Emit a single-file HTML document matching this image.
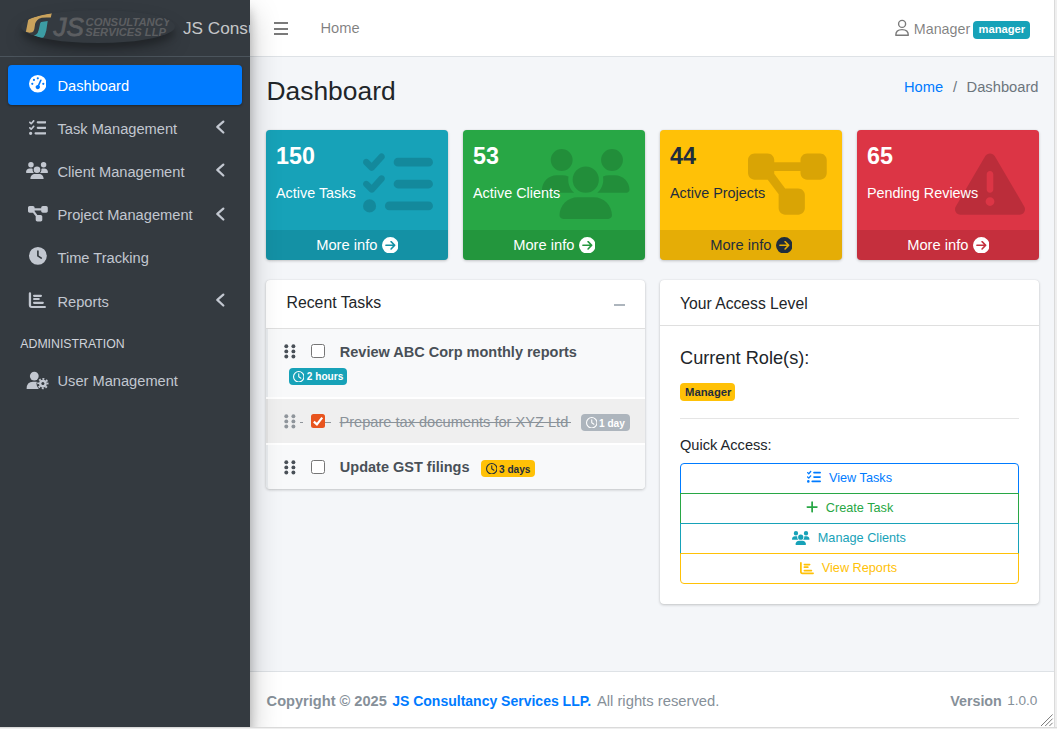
<!DOCTYPE html>
<html><head><meta charset="utf-8"><title>Dashboard</title>
<style>
html,body{margin:0;padding:0;width:1057px;height:729px;overflow:hidden;background:#fff;font-family:"Liberation Sans",sans-serif}
.a{position:absolute;display:block}
.t{position:absolute;white-space:nowrap;line-height:1}
#side{position:absolute;left:0;top:0;width:250px;height:727px;z-index:3;overflow:hidden}
#main{position:absolute;left:0;top:0;width:1057px;height:729px;z-index:1}
</style></head><body>
<div id="main"><div class="a" style="left:0px;top:0px;width:1054px;height:727px;background:#f4f6f9"></div><div class="a" style="left:250px;top:0px;width:804px;height:56px;background:#fff"></div><div class="a" style="left:250px;top:56px;width:804px;height:1px;background:#dee2e6"></div><div class="a" style="left:250px;top:671px;width:804px;height:1px;background:#dee2e6"></div><div class="a" style="left:250px;top:672px;width:804px;height:55px;background:#fff"></div><div class="a" style="left:0px;top:0px;width:250px;height:727px;background:#343a40;box-shadow:0 14px 28px rgba(0,0,0,.25),0 10px 10px rgba(0,0,0,.22);z-index:2"></div><div class="a" style="left:1054px;top:0px;width:3px;height:729px;background:#efefef;border-left:1px solid #dadada;box-sizing:border-box;z-index:5"></div><div class="a" style="left:0px;top:727px;width:1057px;height:2px;background:#efefef;border-top:1px solid #dadada;box-sizing:border-box;z-index:5"></div><div class="a" style="left:274px;top:22px;width:14px;height:2px;background:#7a7a7a"></div><div class="a" style="left:274px;top:27.5px;width:14px;height:2px;background:#7a7a7a"></div><div class="a" style="left:274px;top:33px;width:14px;height:2px;background:#7a7a7a"></div><div class="t" style="left:320.50px;top:21.36px;font-size:14.7px;color:rgba(0,0,0,.5);font-weight:400;">Home</div><svg class="a" style="left:894px;top:19px;" width="16" height="18" viewBox="0 0 16 18"><circle cx="8.1" cy="4.9" r="3.5" fill="none" stroke="#7a7a7a" stroke-width="1.4"/><path d="M1.8 16.2 C1.8 12.5 4.5 10.6 8 10.6 C11.5 10.6 14.3 12.5 14.3 16.2 Z" fill="none" stroke="#7a7a7a" stroke-width="1.4" stroke-linejoin="round"/></svg><div class="t" style="left:913.80px;top:21.80px;font-size:14.3px;color:rgba(0,0,0,.5);font-weight:400;">Manager</div><div class="a" style="left:973px;top:21px;width:57px;height:18px;background:#17a2b8;border-radius:4px"></div><div class="t" style="left:978.50px;top:24.32px;font-size:11.2px;color:#fff;font-weight:700;">manager</div><div class="t" style="left:266.50px;top:78.05px;font-size:26.4px;color:#212529;font-weight:400;">Dashboard</div><div class="t" style="left:904.00px;top:79.96px;font-size:14.7px;color:#007bff;font-weight:400;">Home</div><div class="t" style="left:953.00px;top:79.96px;font-size:14.7px;color:#6c757d;font-weight:400;">/</div><div class="t" style="left:966.60px;top:79.96px;font-size:14.7px;color:#6c757d;font-weight:400;">Dashboard</div><div class="a" style="left:266px;top:130px;width:182px;height:130px;background:#17a2b8;border-radius:4px;box-shadow:0 0 1px rgba(0,0,0,.125),0 1px 3px rgba(0,0,0,.2);overflow:hidden"></div><svg class="a" style="left:363.10px;top:149.40px;" width="70.00" height="70.00" viewBox="0 0 512 512"><path fill="rgba(0,0,0,.15)" d="M152.1 38.2c9.9 8.9 10.7 24 1.8 33.9l-72 80c-4.4 4.9-10.6 7.8-17.2 7.9s-12.9-2.4-17.6-7L7 113C-2.3 103.6-2.3 88.4 7 79s24.6-9.4 33.9 0l22.1 22.1 55.1-61.2c8.9-9.900 24-10.7 33.9-1.8zm0 160c9.9 8.9 10.7 24 1.8 33.9l-72 80c-4.4 4.9-10.6 7.8-17.2 7.9s-12.9-2.4-17.6-7L7 273c-9.4-9.4-9.4-24.6 0-33.9s24.6-9.4 33.9 0l22.1 22.1 55.1-61.2c8.9-9.9 24-10.7 33.9-1.8zM224 96c0-17.7 14.3-32 32-32H480c17.7 0 32 14.3 32 32s-14.3 32-32 32H256c-17.7 0-32-14.3-32-32zm0 160c0-17.7 14.3-32 32-32H480c17.7 0 32 14.3 32 32s-14.3 32-32 32H256c-17.7 0-32-14.3-32-32zM160 416c0-17.7 14.3-32 32-32H480c17.7 0 32 14.3 32 32s-14.3 32-32 32H192c-17.7 0-32-14.3-32-32zM48 368a48 48 0 1 1 0 96 48 48 0 1 1 0-96z"/></svg><div class="t" style="left:276.00px;top:145.28px;font-size:23.3px;color:#fff;font-weight:700;">150</div><div class="t" style="left:276.00px;top:186.41px;font-size:14.4px;color:#fff;font-weight:400;">Active Tasks</div><div class="a" style="left:266px;top:230px;width:182px;height:30px;background:rgba(0,0,0,.1);border-radius:0 0 4px 4px"></div><div class="t" style="left:316.20px;top:238.36px;font-size:14.7px;color:#fff;font-weight:400;">More info</div><svg class="a" style="left:381.50px;top:236.80px;" width="16.60" height="16.60" viewBox="0 0 512 512"><path fill="#fff" d="M0 256a256 256 0 1 0 512 0A256 256 0 1 0 0 256zM297 385c-9.4 9.4-24.6 9.4-33.9 0s-9.4-24.6 0-33.9l71-71L120 280c-13.3 0-24-10.7-24-24s10.7-24 24-24l214.1 0-71-71c-9.4-9.4-9.4-24.6 0-33.9s24.6-9.4 33.9 0L409 239c9.4 9.4 9.4 24.6 0 33.9L297 385z"/></svg><div class="a" style="left:463px;top:130px;width:182px;height:130px;background:#28a745;border-radius:4px;box-shadow:0 0 1px rgba(0,0,0,.125),0 1px 3px rgba(0,0,0,.2);overflow:hidden"></div><svg class="a" style="left:542.20px;top:149.40px;" width="87.50" height="70.00" viewBox="0 0 640 512"><path fill="rgba(0,0,0,.15)" d="M144 0a80 80 0 1 1 0 160A80 80 0 1 1 144 0zM512 0a80 80 0 1 1 0 160A80 80 0 1 1 512 0zM0 298.7C0 239.8 47.8 192 106.7 192h42.7c15.9 0 31 3.5 44.6 9.7c-1.3 7.2-1.9 14.7-1.9 22.3c0 38.2 16.8 72.5 43.3 96c-.2 0-.4 0-.7 0H21.3C9.6 320 0 310.4 0 298.7zM405.3 320c-.2 0-.4 0-.7 0c26.6-23.5 43.3-57.8 43.3-96c0-7.6-.7-15-1.9-22.3c13.6-6.3 28.7-9.7 44.6-9.7h42.7C592.2 192 640 239.8 640 298.7c0 11.8-9.6 21.3-21.3 21.3H405.3zM224 224a96 96 0 1 1 192 0 96 96 0 1 1 -192 0zM128 485.3C128 411.7 187.700 352 261.3 352H378.7C452.3 352 512 411.7 512 485.3c0 14.7-11.9 26.7-26.7 26.7H154.7c-14.7 0-26.7-11.9-26.7-26.7z"/></svg><div class="t" style="left:473.00px;top:145.28px;font-size:23.3px;color:#fff;font-weight:700;">53</div><div class="t" style="left:473.00px;top:186.41px;font-size:14.4px;color:#fff;font-weight:400;">Active Clients</div><div class="a" style="left:463px;top:230px;width:182px;height:30px;background:rgba(0,0,0,.1);border-radius:0 0 4px 4px"></div><div class="t" style="left:513.20px;top:238.36px;font-size:14.7px;color:#fff;font-weight:400;">More info</div><svg class="a" style="left:578.50px;top:236.80px;" width="16.60" height="16.60" viewBox="0 0 512 512"><path fill="#fff" d="M0 256a256 256 0 1 0 512 0A256 256 0 1 0 0 256zM297 385c-9.4 9.4-24.6 9.4-33.9 0s-9.4-24.6 0-33.9l71-71L120 280c-13.3 0-24-10.7-24-24s10.7-24 24-24l214.1 0-71-71c-9.4-9.4-9.4-24.6 0-33.9s24.6-9.4 33.9 0L409 239c9.4 9.4 9.4 24.6 0 33.9L297 385z"/></svg><div class="a" style="left:660px;top:130px;width:182px;height:130px;background:#ffc107;border-radius:4px;box-shadow:0 0 1px rgba(0,0,0,.125),0 1px 3px rgba(0,0,0,.2);overflow:hidden"></div><svg class="a" style="left:748.10px;top:149.40px;" width="78.75" height="70.00" viewBox="0 0 576 512"><path fill="rgba(0,0,0,.15)" d="M0 80C0 53.5 21.5 32 48 32h96c26.5 0 48 21.5 48 48V96H384V80c0-26.5 21.5-48 48-48h96c26.5 0 48 21.5 48 48v96c0 26.5-21.5 48-48 48H432c-26.5 0-48-21.5-48-48V160H192v16c0 1.7-.1 3.4-.3 5L272 288h96c26.5 0 48 21.5 48 48v96c0 26.5-21.5 48-48 48H272c-26.5 0-48-21.5-48-48V336c0-1.7 .1-3.4 .3-5L144 224H48c-26.5 0-48-21.5-48-48V80z"/></svg><div class="t" style="left:670.00px;top:145.28px;font-size:23.3px;color:#1f2d3d;font-weight:700;">44</div><div class="t" style="left:670.00px;top:186.41px;font-size:14.4px;color:#1f2d3d;font-weight:400;">Active Projects</div><div class="a" style="left:660px;top:230px;width:182px;height:30px;background:rgba(0,0,0,.1);border-radius:0 0 4px 4px"></div><div class="t" style="left:710.20px;top:238.36px;font-size:14.7px;color:#1f2d3d;font-weight:400;">More info</div><svg class="a" style="left:775.50px;top:236.80px;" width="16.60" height="16.60" viewBox="0 0 512 512"><path fill="#1f2d3d" d="M0 256a256 256 0 1 0 512 0A256 256 0 1 0 0 256zM297 385c-9.4 9.4-24.6 9.4-33.9 0s-9.4-24.6 0-33.9l71-71L120 280c-13.3 0-24-10.7-24-24s10.7-24 24-24l214.1 0-71-71c-9.4-9.4-9.4-24.6 0-33.9s24.6-9.4 33.9 0L409 239c9.4 9.4 9.4 24.6 0 33.9L297 385z"/></svg><div class="a" style="left:857px;top:130px;width:182px;height:130px;background:#dc3545;border-radius:4px;box-shadow:0 0 1px rgba(0,0,0,.125),0 1px 3px rgba(0,0,0,.2);overflow:hidden"></div><svg class="a" style="left:954.60px;top:149.40px;" width="70.00" height="70.00" viewBox="0 0 512 512"><path fill="rgba(0,0,0,.15)" d="M256 32c14.2 0 27.3 7.5 34.5 19.8l216 368c7.3 12.4 7.3 27.7 .2 40.1S486.3 480 472 480H40c-14.3 0-27.6-7.700-34.7-20.1s-7-27.8 .2-40.1l216-368C228.7 39.5 241.8 32 256 32zm0 128c-13.3 0-24 10.7-24 24V296c0 13.3 10.7 24 24 24s24-10.7 24-24V184c0-13.3-10.7-24-24-24zm32 224a32 32 0 1 0 -64 0 32 32 0 1 0 64 0z"/></svg><div class="t" style="left:867.00px;top:145.28px;font-size:23.3px;color:#fff;font-weight:700;">65</div><div class="t" style="left:867.00px;top:186.41px;font-size:14.4px;color:#fff;font-weight:400;">Pending Reviews</div><div class="a" style="left:857px;top:230px;width:182px;height:30px;background:rgba(0,0,0,.1);border-radius:0 0 4px 4px"></div><div class="t" style="left:907.20px;top:238.36px;font-size:14.7px;color:#fff;font-weight:400;">More info</div><svg class="a" style="left:972.50px;top:236.80px;" width="16.60" height="16.60" viewBox="0 0 512 512"><path fill="#fff" d="M0 256a256 256 0 1 0 512 0A256 256 0 1 0 0 256zM297 385c-9.4 9.4-24.6 9.4-33.9 0s-9.4-24.6 0-33.9l71-71L120 280c-13.3 0-24-10.7-24-24s10.7-24 24-24l214.1 0-71-71c-9.4-9.4-9.4-24.6 0-33.9s24.6-9.4 33.9 0L409 239c9.4 9.4 9.4 24.6 0 33.9L297 385z"/></svg><div class="a" style="left:266px;top:280px;width:379px;height:209px;background:#fff;border-radius:4px;box-shadow:0 0 1px rgba(0,0,0,.125),0 1px 3px rgba(0,0,0,.2)"></div><div class="a" style="left:266px;top:328px;width:379px;height:1px;background:rgba(0,0,0,.125)"></div><div class="t" style="left:286.50px;top:295.43px;font-size:15.8px;color:#212529;font-weight:400;">Recent Tasks</div><div class="a" style="left:614px;top:304px;width:11px;height:2px;background:#adb5bd"></div><div class="a" style="left:266px;top:329px;width:379px;height:68px;background:#f8f9fa;border-left:2px solid #e9ecef;box-sizing:border-box"></div><div class="a" style="left:266px;top:399px;width:379px;height:44px;background:#efefef;border-left:2px solid #e4e4e4;box-sizing:border-box"></div><div class="a" style="left:266px;top:445px;width:379px;height:44px;background:#f8f9fa;border-left:2px solid #e9ecef;box-sizing:border-box;border-radius:0 0 4px 4px"></div><svg class="a" style="left:283.5px;top:343.5px;" width="12" height="15" viewBox="0 0 12 15"><circle cx="2.3" cy="2.3" r="1.95" fill="#495057"/><circle cx="2.3" cy="7.4" r="1.95" fill="#495057"/><circle cx="2.3" cy="12.5" r="1.95" fill="#495057"/><circle cx="9.4" cy="2.3" r="1.95" fill="#495057"/><circle cx="9.4" cy="7.4" r="1.95" fill="#495057"/><circle cx="9.4" cy="12.5" r="1.95" fill="#495057"/></svg><div class="a" style="left:311px;top:344px;width:14px;height:14px;background:#fff;border:1px solid #767676;border-radius:2.5px;box-sizing:border-box"></div><div class="t" style="left:339.80px;top:344.83px;font-size:14.5px;color:#495057;font-weight:700;">Review ABC Corp monthly reports</div><div class="a" style="left:288.8px;top:368px;width:58px;height:17px;background:#17a2b8;border-radius:4px"></div><svg class="a" style="left:292.90px;top:370.70px;" width="11.50" height="11.50" viewBox="0 0 512 512"><path fill="#fff" d="M464 256A208 208 0 1 1 48 256a208 208 0 1 1 416 0zM0 256a256 256 0 1 0 512 0A256 256 0 1 0 0 256zM232 120V256c0 8 4 15.5 10.7 20l96 64c11 7.4 25.9 5.4 33.3-5.6s5.4-25.9-5.6-33.3L280 243.2V120c0-13.3-10.7-24-24-24s-24 10.7-24 24z"/></svg><div class="t" style="left:306.80px;top:372.25px;font-size:10.1px;color:#fff;font-weight:700;">2 hours</div><svg class="a" style="left:283.5px;top:413.5px;" width="12" height="15" viewBox="0 0 12 15"><circle cx="2.3" cy="2.3" r="1.95" fill="#8f959b"/><circle cx="2.3" cy="7.4" r="1.95" fill="#8f959b"/><circle cx="2.3" cy="12.5" r="1.95" fill="#8f959b"/><circle cx="9.4" cy="2.3" r="1.95" fill="#8f959b"/><circle cx="9.4" cy="7.4" r="1.95" fill="#8f959b"/><circle cx="9.4" cy="12.5" r="1.95" fill="#8f959b"/></svg><div class="a" style="left:300px;top:422px;width:3px;height:1px;background:#8f959b"></div><div class="a" style="left:325px;top:422px;width:6px;height:1px;background:#8f959b"></div><div class="a" style="left:566px;top:422px;width:5px;height:1px;background:#8a9299"></div><div class="a" style="left:311px;top:414px;width:14px;height:14px;background:#e8541e;border-radius:2.5px"></div><svg class="a" style="left:311px;top:414px;" width="14" height="14" viewBox="0 0 14 14"><polyline points="2.8,7.6 5.9,10.4 11.2,3.6" fill="none" stroke="#fff" stroke-width="2.2"/></svg><div class="t" style="left:339.50px;top:414.64px;font-size:14.6px;color:#8a9299;font-weight:400;text-decoration:line-through">Prepare tax documents for XYZ Ltd</div><div class="a" style="left:581px;top:414.3px;width:49px;height:16.5px;background:#adb5bd;border-radius:4px"></div><svg class="a" style="left:585.50px;top:416.80px;" width="11.50" height="11.50" viewBox="0 0 512 512"><path fill="#fff" d="M464 256A208 208 0 1 1 48 256a208 208 0 1 1 416 0zM0 256a256 256 0 1 0 512 0A256 256 0 1 0 0 256zM232 120V256c0 8 4 15.5 10.7 20l96 64c11 7.4 25.9 5.4 33.3-5.6s5.4-25.9-5.6-33.3L280 243.2V120c0-13.3-10.7-24-24-24s-24 10.7-24 24z"/></svg><div class="t" style="left:599.00px;top:418.85px;font-size:10.1px;color:#fff;font-weight:700;">1 day</div><svg class="a" style="left:283.5px;top:459.5px;" width="12" height="15" viewBox="0 0 12 15"><circle cx="2.3" cy="2.3" r="1.95" fill="#495057"/><circle cx="2.3" cy="7.4" r="1.95" fill="#495057"/><circle cx="2.3" cy="12.5" r="1.95" fill="#495057"/><circle cx="9.4" cy="2.3" r="1.95" fill="#495057"/><circle cx="9.4" cy="7.4" r="1.95" fill="#495057"/><circle cx="9.4" cy="12.5" r="1.95" fill="#495057"/></svg><div class="a" style="left:311px;top:460px;width:14px;height:14px;background:#fff;border:1px solid #767676;border-radius:2.5px;box-sizing:border-box"></div><div class="t" style="left:339.80px;top:460.43px;font-size:14.5px;color:#495057;font-weight:700;">Update GST filings</div><div class="a" style="left:481px;top:460.2px;width:54px;height:16.5px;background:#ffc107;border-radius:4px"></div><svg class="a" style="left:485.50px;top:462.70px;" width="11.50" height="11.50" viewBox="0 0 512 512"><path fill="#1f2d3d" d="M464 256A208 208 0 1 1 48 256a208 208 0 1 1 416 0zM0 256a256 256 0 1 0 512 0A256 256 0 1 0 0 256zM232 120V256c0 8 4 15.5 10.7 20l96 64c11 7.4 25.9 5.4 33.3-5.6s5.4-25.9-5.6-33.3L280 243.2V120c0-13.3-10.7-24-24-24s-24 10.7-24 24z"/></svg><div class="t" style="left:499.00px;top:464.85px;font-size:10.1px;color:#1f2d3d;font-weight:700;">3 days</div><div class="a" style="left:660px;top:280px;width:379px;height:324px;background:#fff;border-radius:4px;box-shadow:0 0 1px rgba(0,0,0,.125),0 1px 3px rgba(0,0,0,.2)"></div><div class="a" style="left:660px;top:325px;width:379px;height:1px;background:rgba(0,0,0,.125)"></div><div class="t" style="left:680.00px;top:295.91px;font-size:15.7px;color:#212529;font-weight:400;">Your Access Level</div><div class="t" style="left:680.00px;top:349.29px;font-size:18.2px;color:#212529;font-weight:400;">Current Role(s):</div><div class="a" style="left:680px;top:383px;width:55px;height:18px;background:#ffc107;border-radius:4px"></div><div class="t" style="left:685.00px;top:386.63px;font-size:11.3px;color:#1f2d3d;font-weight:700;">Manager</div><div class="a" style="left:680px;top:418px;width:339px;height:1px;background:rgba(0,0,0,.1)"></div><div class="t" style="left:680.00px;top:438.34px;font-size:14.6px;color:#212529;font-weight:400;">Quick Access:</div><div class="a" style="left:680px;top:463px;width:339px;height:31px;border:1px solid #007bff;border-radius:4px 4px 0 0;box-sizing:border-box;z-index:0"></div><div class="t" style="left:829.00px;top:471.75px;font-size:12.7px;color:#007bff;font-weight:400;">View Tasks</div><div class="a" style="left:680px;top:493px;width:339px;height:31px;border:1px solid #28a745;border-radius:0;box-sizing:border-box;z-index:1"></div><div class="t" style="left:825.80px;top:501.75px;font-size:12.7px;color:#28a745;font-weight:400;">Create Task</div><div class="a" style="left:680px;top:523px;width:339px;height:31px;border:1px solid #17a2b8;border-radius:0;box-sizing:border-box;z-index:2"></div><div class="t" style="left:817.80px;top:531.75px;font-size:12.7px;color:#17a2b8;font-weight:400;">Manage Clients</div><div class="a" style="left:680px;top:553px;width:339px;height:31px;border:1px solid #ffc107;border-radius:0 0 4px 4px;box-sizing:border-box;z-index:3"></div><div class="t" style="left:821.80px;top:561.75px;font-size:12.7px;color:#ffc107;font-weight:400;">View Reports</div><svg class="a" style="left:806.80px;top:470.40px;" width="14.00" height="14.00" viewBox="0 0 512 512"><path fill="#007bff" d="M152.1 38.2c9.9 8.9 10.7 24 1.8 33.9l-72 80c-4.4 4.9-10.6 7.8-17.2 7.9s-12.9-2.4-17.6-7L7 113C-2.3 103.6-2.3 88.4 7 79s24.6-9.4 33.9 0l22.1 22.1 55.1-61.2c8.9-9.900 24-10.7 33.9-1.8zm0 160c9.9 8.9 10.7 24 1.8 33.9l-72 80c-4.4 4.9-10.6 7.8-17.2 7.9s-12.9-2.4-17.6-7L7 273c-9.4-9.4-9.4-24.6 0-33.9s24.6-9.4 33.9 0l22.1 22.1 55.1-61.2c8.9-9.9 24-10.7 33.9-1.8zM224 96c0-17.7 14.3-32 32-32H480c17.7 0 32 14.3 32 32s-14.3 32-32 32H256c-17.7 0-32-14.3-32-32zm0 160c0-17.7 14.3-32 32-32H480c17.7 0 32 14.3 32 32s-14.3 32-32 32H256c-17.7 0-32-14.3-32-32zM160 416c0-17.7 14.3-32 32-32H480c17.7 0 32 14.3 32 32s-14.3 32-32 32H192c-17.7 0-32-14.3-32-32zM48 368a48 48 0 1 1 0 96 48 48 0 1 1 0-96z"/></svg><svg class="a" style="left:805.60px;top:500.00px;" width="12.25" height="14.00" viewBox="0 0 448 512"><path fill="#28a745" d="M256 80c0-17.7-14.3-32-32-32s-32 14.3-32 32V224H48c-17.7 0-32 14.3-32 32s14.3 32 32 32H192V432c0 17.7 14.3 32 32 32s32-14.3 32-32V288H400c17.7 0 32-14.3 32-32s-14.3-32-32-32H256V80z"/></svg><svg class="a" style="left:792.10px;top:530.90px;" width="17.50" height="14.00" viewBox="0 0 640 512"><path fill="#17a2b8" d="M144 0a80 80 0 1 1 0 160A80 80 0 1 1 144 0zM512 0a80 80 0 1 1 0 160A80 80 0 1 1 512 0zM0 298.7C0 239.8 47.8 192 106.7 192h42.7c15.9 0 31 3.5 44.6 9.7c-1.3 7.2-1.9 14.7-1.9 22.3c0 38.2 16.8 72.5 43.3 96c-.2 0-.4 0-.7 0H21.3C9.6 320 0 310.4 0 298.7zM405.3 320c-.2 0-.4 0-.7 0c26.6-23.5 43.3-57.8 43.3-96c0-7.6-.7-15-1.9-22.3c13.6-6.3 28.7-9.7 44.6-9.7h42.7C592.2 192 640 239.8 640 298.7c0 11.8-9.6 21.3-21.3 21.3H405.3zM224 224a96 96 0 1 1 192 0 96 96 0 1 1 -192 0zM128 485.3C128 411.7 187.700 352 261.3 352H378.7C452.3 352 512 411.7 512 485.3c0 14.7-11.9 26.7-26.7 26.7H154.7c-14.7 0-26.7-11.9-26.7-26.7z"/></svg><svg class="a" style="left:800.00px;top:561.10px;" width="14.00" height="14.00" viewBox="0 0 512 512"><path fill="#ffc107" d="M32 32c17.7 0 32 14.3 32 32V400c0 8.8 7.2 16 16 16H480c17.7 0 32 14.3 32 32s-14.3 32-32 32H80c-44.2 0-80-35.8-80-80V64C0 46.3 14.3 32 32 32zm96 96c0-17.7 14.3-32 32-32l192 0c17.7 0 32 14.3 32 32s-14.3 32-32 32l-192 0c-17.7 0-32-14.3-32-32zm32 64H288c17.7 0 32 14.3 32 32s-14.3 32-32 32H160c-17.7 0-32-14.3-32-32s14.3-32 32-32zm0 128H416c17.7 0 32 14.3 32 32s-14.3 32-32 32H160c-17.7 0-32-14.3-32-32s14.3-32 32-32z"/></svg><div class="t" style="left:266.60px;top:693.94px;font-size:14.6px;color:#869099;font-weight:400;"><b style="font-size:14.6px">Copyright &copy; 2025</b><b style="position:absolute;left:125.6px;font-size:14px;color:#007bff">JS Consultancy Services LLP.</b><span style="position:absolute;left:330.3px;font-size:14.8px">All rights reserved.</span></div><div class="t" style="left:950.20px;top:694.20px;font-size:14.3px;color:#869099;font-weight:400;"><b>Version</b><span style="position:absolute;left:57px;font-size:13.6px">1.0.0</span></div><svg class="a" style="left:1038px;top:713px;z-index:6" width="16" height="14" viewBox="0 0 16 14"><path d="M3 13 L14.6 1.5 M7.2 13 L14.6 5.6 M11.4 13 L14.6 9.8" stroke="#6a6a6a" stroke-width="0.9" fill="none"/></svg></div>
<div id="side"><div class="a" style="left:0px;top:56px;width:250px;height:1px;background:#4b545c"></div><div class="a" style="left:20.8px;top:10px;width:154px;height:33px;border-radius:50%;background:#343a40;box-shadow:0 10px 20px rgba(0,0,0,.19),0 6px 6px rgba(0,0,0,.23);overflow:hidden"><svg class="a" style="left:-20.8px;top:-10px" width="200" height="60" viewBox="0 0 200 60"><path fill="#c9a25c" d="M25.9 31.8 L28.2 19.9 Q28.8 18.8 30.2 18.6 Q40 14.5 51.8 13.1 L50.8 17.6 Q45 17.2 41.8 17.8 Q38.5 18.6 37.2 20.3 Q35.6 22 35.2 23.6 L34.3 29.3 Q33.6 31.8 32.3 32.2 Q30.5 32.8 28.6 32.6 Z"/><path fill="#3c9ca3" d="M41.3 21.9 L47.7 20.9 L46.3 30.6 Q45.2 35.5 43.4 37.4 L40.9 38 L33.7 35.7 Q36.6 34.5 37.6 33 Q38.8 30.5 39.3 27.3 L40.1 23.6 Q40.5 22.3 41.3 21.9 Z"/><text x="53.4" y="35.8" font-family="Liberation Sans" font-style="italic" font-size="26" fill="#5c5e61" stroke="#5c5e61" stroke-width="0.8">JS</text><text x="85.5" y="25.8" font-family="Liberation Sans" font-style="italic" font-weight="700" font-size="11.3" fill="#5c5e61">CONSULTANCY</text><text x="85.2" y="35.9" font-family="Liberation Sans" font-style="italic" font-weight="700" font-size="11.2" fill="#5c5e61">SERVICES LLP</text></svg></div><div class="t" style="left:183.00px;top:19.94px;font-size:17.2px;color:rgba(255,255,255,.72);font-weight:400;width:67px;overflow:hidden">JS Consultancy Services LLP</div><div class="a" style="left:8px;top:65px;width:234px;height:40px;background:#007bff;border-radius:4px;box-shadow:0 1px 3px rgba(0,0,0,.12),0 1px 2px rgba(0,0,0,.24)"></div><div class="t" style="left:57.50px;top:78.50px;font-size:14.65px;color:#fff;font-weight:400;">Dashboard</div><div class="t" style="left:57.50px;top:121.70px;font-size:14.65px;color:#c2c7d0;font-weight:400;">Task Management</div><div class="t" style="left:57.50px;top:164.90px;font-size:14.65px;color:#c2c7d0;font-weight:400;">Client Management</div><div class="t" style="left:57.50px;top:208.10px;font-size:14.65px;color:#c2c7d0;font-weight:400;">Project Management</div><div class="t" style="left:57.50px;top:251.30px;font-size:14.65px;color:#c2c7d0;font-weight:400;">Time Tracking</div><div class="t" style="left:57.50px;top:294.50px;font-size:14.65px;color:#c2c7d0;font-weight:400;">Reports</div><div class="t" style="left:57.50px;top:374.00px;font-size:14.65px;color:#c2c7d0;font-weight:400;">User Management</div><div class="t" style="left:20.30px;top:338.39px;font-size:12.3px;color:#d0d4db;font-weight:400;">ADMINISTRATION</div><svg class="a" style="left:28.80px;top:75.40px;" width="17.60" height="17.60" viewBox="0 0 512 512"><path fill="#fff" d="M0 256a256 256 0 1 1 512 0A256 256 0 1 1 0 256zM288 96a32 32 0 1 0 -64 0 32 32 0 1 0 64 0zM256 416c35.3 0 64-28.7 64-64c0-17.4-6.9-33.1-18.1-44.6L366 161.7c5.3-12.1-.2-26.3-12.3-31.6s-26.3 .2-31.6 12.3L257.9 288c-.6 0-1.3 0-1.900 0c-35.3 0-64 28.7-64 64s28.7 64 64 64zM176 144a32 32 0 1 0 -64 0 32 32 0 1 0 64 0zM96 288a32 32 0 1 0 0-64 32 32 0 1 0 0 64zm352-32a32 32 0 1 0 -64 0 32 32 0 1 0 64 0z"/></svg><svg class="a" style="left:28.60px;top:118.90px;" width="17.60" height="17.60" viewBox="0 0 512 512"><path fill="#c2c7d0" d="M152.1 38.2c9.9 8.9 10.7 24 1.8 33.9l-72 80c-4.4 4.9-10.6 7.8-17.2 7.9s-12.9-2.4-17.6-7L7 113C-2.3 103.6-2.3 88.4 7 79s24.6-9.4 33.9 0l22.1 22.1 55.1-61.2c8.9-9.900 24-10.7 33.9-1.8zm0 160c9.9 8.9 10.7 24 1.8 33.9l-72 80c-4.4 4.9-10.6 7.8-17.2 7.9s-12.9-2.4-17.6-7L7 273c-9.4-9.4-9.4-24.6 0-33.9s24.6-9.4 33.9 0l22.1 22.1 55.1-61.2c8.9-9.9 24-10.7 33.9-1.8zM224 96c0-17.7 14.3-32 32-32H480c17.7 0 32 14.3 32 32s-14.3 32-32 32H256c-17.7 0-32-14.3-32-32zm0 160c0-17.7 14.3-32 32-32H480c17.7 0 32 14.3 32 32s-14.3 32-32 32H256c-17.7 0-32-14.3-32-32zM160 416c0-17.7 14.3-32 32-32H480c17.7 0 32 14.3 32 32s-14.3 32-32 32H192c-17.7 0-32-14.3-32-32zM48 368a48 48 0 1 1 0 96 48 48 0 1 1 0-96z"/></svg><svg class="a" style="left:26.40px;top:161.80px;" width="22.00" height="17.60" viewBox="0 0 640 512"><path fill="#c2c7d0" d="M144 0a80 80 0 1 1 0 160A80 80 0 1 1 144 0zM512 0a80 80 0 1 1 0 160A80 80 0 1 1 512 0zM0 298.7C0 239.8 47.8 192 106.7 192h42.7c15.9 0 31 3.5 44.6 9.7c-1.3 7.2-1.9 14.7-1.9 22.3c0 38.2 16.8 72.5 43.3 96c-.2 0-.4 0-.7 0H21.3C9.6 320 0 310.4 0 298.7zM405.3 320c-.2 0-.4 0-.7 0c26.6-23.5 43.3-57.8 43.3-96c0-7.6-.7-15-1.9-22.3c13.6-6.3 28.7-9.7 44.6-9.7h42.7C592.2 192 640 239.8 640 298.7c0 11.8-9.6 21.3-21.3 21.3H405.3zM224 224a96 96 0 1 1 192 0 96 96 0 1 1 -192 0zM128 485.3C128 411.7 187.700 352 261.3 352H378.7C452.3 352 512 411.7 512 485.3c0 14.7-11.9 26.7-26.7 26.7H154.7c-14.7 0-26.7-11.9-26.7-26.7z"/></svg><svg class="a" style="left:27.80px;top:205.00px;" width="19.80" height="17.60" viewBox="0 0 576 512"><path fill="#c2c7d0" d="M0 80C0 53.5 21.5 32 48 32h96c26.5 0 48 21.5 48 48V96H384V80c0-26.5 21.5-48 48-48h96c26.5 0 48 21.5 48 48v96c0 26.5-21.5 48-48 48H432c-26.5 0-48-21.5-48-48V160H192v16c0 1.7-.1 3.4-.3 5L272 288h96c26.5 0 48 21.5 48 48v96c0 26.5-21.5 48-48 48H272c-26.5 0-48-21.5-48-48V336c0-1.7 .1-3.4 .3-5L144 224H48c-26.5 0-48-21.5-48-48V80z"/></svg><svg class="a" style="left:28.90px;top:247.40px;" width="17.80" height="17.80" viewBox="0 0 512 512"><path fill="#c2c7d0" d="M256 0a256 256 0 1 1 0 512A256 256 0 1 1 256 0zM232 120V256c0 8 4 15.5 10.7 20l96 64c11 7.4 25.9 5.4 33.3-5.6s5.4-25.9-5.6-33.3L280 243.2V120c0-13.3-10.7-24-24-24s-24 10.7-24 24z"/></svg><svg class="a" style="left:24px;top:288px;" width="28" height="24" viewBox="0 0 28 24"><path fill="#c2c7d0" d="M4.8 5.5 Q4.8 4.3 5.95 4.3 Q7.1 4.3 7.1 5.5 V17.6 Q7.1 18 7.5 18 H20.9 Q22 18 22 19.05 Q22 20.1 20.9 20.1 H7.8 Q4.8 20.1 4.8 17.1 Z"/><rect x="9" y="6.8" width="9" height="2.1" rx="1.05" fill="#c2c7d0"/><rect x="9" y="10" width="6.8" height="2.1" rx="1.05" fill="#c2c7d0"/><rect x="9" y="13.8" width="10.9" height="2.1" rx="1.05" fill="#c2c7d0"/></svg><svg class="a" style="left:22px;top:368px;" width="30" height="24" viewBox="0 0 30 24"><circle cx="12.3" cy="8.1" r="4.4" fill="#c2c7d0"/><path fill="#c2c7d0" d="M4.6 20.9 Q4.6 13.8 11 13.8 H14 Q19 13.8 20 17 V20.9 Z"/><circle cx="20.9" cy="15.6" r="6.4" fill="#343a40"/><circle cx="20.9" cy="15.6" r="3.9" fill="#c2c7d0"/><circle cx="20.9" cy="15.6" r="4.7" fill="none" stroke="#c2c7d0" stroke-width="1.9" stroke-dasharray="1.85 1.84" transform="rotate(-12 20.9 15.6)"/><circle cx="20.9" cy="15.6" r="1.5" fill="#343a40"/></svg><svg class="a" style="left:214px;top:120.1px;" width="12" height="14" viewBox="0 0 12 14"><polyline points="9.3,1.6 3.3,6.9 9.3,12.5" fill="none" stroke="#c2c7d0" stroke-width="2.2" stroke-linecap="round" stroke-linejoin="round"/></svg><svg class="a" style="left:214px;top:163.3px;" width="12" height="14" viewBox="0 0 12 14"><polyline points="9.3,1.6 3.3,6.9 9.3,12.5" fill="none" stroke="#c2c7d0" stroke-width="2.2" stroke-linecap="round" stroke-linejoin="round"/></svg><svg class="a" style="left:214px;top:206.5px;" width="12" height="14" viewBox="0 0 12 14"><polyline points="9.3,1.6 3.3,6.9 9.3,12.5" fill="none" stroke="#c2c7d0" stroke-width="2.2" stroke-linecap="round" stroke-linejoin="round"/></svg><svg class="a" style="left:214px;top:292.9px;" width="12" height="14" viewBox="0 0 12 14"><polyline points="9.3,1.6 3.3,6.9 9.3,12.5" fill="none" stroke="#c2c7d0" stroke-width="2.2" stroke-linecap="round" stroke-linejoin="round"/></svg></div>
</body></html>
